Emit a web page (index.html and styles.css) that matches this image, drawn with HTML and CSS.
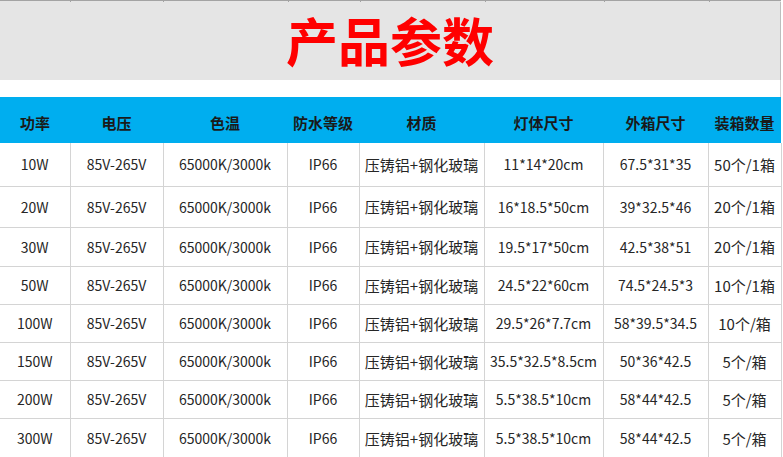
FILE: index.html
```html
<!DOCTYPE html>
<html lang="zh-CN">
<head>
<meta charset="utf-8">
<title>产品参数</title>
<link rel="stylesheet" href="styles.css">
</head>
<body>
<div class="sheet">
  <div class="gridtop">
    <span class="tick t1"></span><span class="tick t2"></span><span class="tick t3"></span><span class="tick t4"></span><span class="tick t5"></span><span class="tick t6"></span><span class="tick t7"></span>
  </div>
  <div class="banner"><h1 class="title">产品参数</h1></div>
  <div class="spacer"></div>
  <table class="params">
    <colgroup>
      <col class="c1"><col class="c2"><col class="c3"><col class="c4"><col class="c5"><col class="c6"><col class="c7"><col class="c8">
    </colgroup>
    <thead>
      <tr><th>功率</th><th>电压</th><th>色温</th><th>防水等级</th><th>材质</th><th>灯体尺寸</th><th>外箱尺寸</th><th>装箱数量</th></tr>
    </thead>
    <tbody>
      <tr><td>10W</td><td>85V-265V</td><td>65000K/3000k</td><td>IP66</td><td class="cn">压铸铝+钢化玻璃</td><td>11*14*20cm</td><td>67.5*31*35</td><td class="cn">50个/1箱</td></tr>
      <tr><td>20W</td><td>85V-265V</td><td>65000K/3000k</td><td>IP66</td><td class="cn">压铸铝+钢化玻璃</td><td>16*18.5*50cm</td><td>39*32.5*46</td><td class="cn">20个/1箱</td></tr>
      <tr><td>30W</td><td>85V-265V</td><td>65000K/3000k</td><td>IP66</td><td class="cn">压铸铝+钢化玻璃</td><td>19.5*17*50cm</td><td>42.5*38*51</td><td class="cn">20个/1箱</td></tr>
      <tr><td>50W</td><td>85V-265V</td><td>65000K/3000k</td><td>IP66</td><td class="cn">压铸铝+钢化玻璃</td><td>24.5*22*60cm</td><td>74.5*24.5*3</td><td class="cn">10个/1箱</td></tr>
      <tr><td>100W</td><td>85V-265V</td><td>65000K/3000k</td><td>IP66</td><td class="cn">压铸铝+钢化玻璃</td><td>29.5*26*7.7cm</td><td>58*39.5*34.5</td><td class="cn">10个/箱</td></tr>
      <tr><td>150W</td><td>85V-265V</td><td>65000K/3000k</td><td>IP66</td><td class="cn">压铸铝+钢化玻璃</td><td>35.5*32.5*8.5cm</td><td>50*36*42.5</td><td class="cn">5个/箱</td></tr>
      <tr><td>200W</td><td>85V-265V</td><td>65000K/3000k</td><td>IP66</td><td class="cn">压铸铝+钢化玻璃</td><td>5.5*38.5*10cm</td><td>58*44*42.5</td><td class="cn">5个/箱</td></tr>
      <tr><td>300W</td><td>85V-265V</td><td>65000K/3000k</td><td>IP66</td><td class="cn">压铸铝+钢化玻璃</td><td>5.5*38.5*10cm</td><td>58*44*42.5</td><td class="cn">5个/箱</td></tr>
    </tbody>
  </table>
</div>
</body>
</html>
```
FILE: styles.css
```css
html, body {
  margin: 0;
  padding: 0;
  background: #ffffff;
}
.sheet {
  width: 783px;
  height: 457px;
  overflow: hidden;
  font-family: "Noto Sans CJK SC", "Noto Sans", sans-serif;
}
.gridtop {
  position: relative;
  height: 2px;
  background: #e5e5e5;
  border-top: 1px solid #a3a3a3;
  box-sizing: border-box;
  width: 781px;
}
.tick {
  position: absolute;
  top: -1px;
  width: 1px;
  height: 2px;
  background: #a3a3a3;
}
.t1 { left: 70px; }
.t2 { left: 163px; }
.t3 { left: 288px; }
.t4 { left: 360px; }
.t5 { left: 485px; }
.t6 { left: 604px; }
.t7 { left: 709px; }
.banner {
  width: 780px;
  height: 78px;
  background: #e5e5e5;
  border-right: 1px solid #bdbdbd;
  display: flex;
  align-items: center;
  justify-content: center;
}
.title {
  margin: 0;
  padding-bottom: 2px;
  font-size: 52px;
  font-weight: 700;
  line-height: 1;
  color: #ff0000;
}
.spacer {
  width: 780px;
  height: 17px;
  border-right: 1px solid #d4d4d4;
}
.params {
  border-collapse: collapse;
  table-layout: fixed;
  width: 781px;
}
.c1 { width: 70px; }
.c2 { width: 93px; }
.c3 { width: 124px; }
.c4 { width: 72px; }
.c5 { width: 125px; }
.c6 { width: 119px; }
.c7 { width: 105px; }
.c8 { width: 73px; }
.params th {
  background: #00aeef;
  height: 46px;
  padding: 4px 0 0 0;
  box-sizing: border-box;
  font-size: 15px;
  font-weight: 700;
  color: #1a1a1a;
  text-align: center;
  white-space: nowrap;
}
.params td {
  font-size: 14px;
  font-weight: 400;
  color: #262626;
  text-align: center;
  white-space: nowrap;
  padding: 0;
  border-left: 1px solid #d4d4d4;
  border-bottom: 1px solid #d4d4d4;
}
.params td.cn {
  font-size: 15px;
}
.params td:first-child {
  border-left: none;
}
.params td:last-child {
  border-right: 1px solid #d4d4d4;
}
.params tbody tr { height: 38px; }
.params tbody tr:nth-child(1) { height: 43px; }
.params tbody tr:nth-child(2) { height: 41px; }
.params tbody tr:nth-child(3) { height: 39px; }
.params tbody tr:nth-child(8) { height: 40px; }
```
